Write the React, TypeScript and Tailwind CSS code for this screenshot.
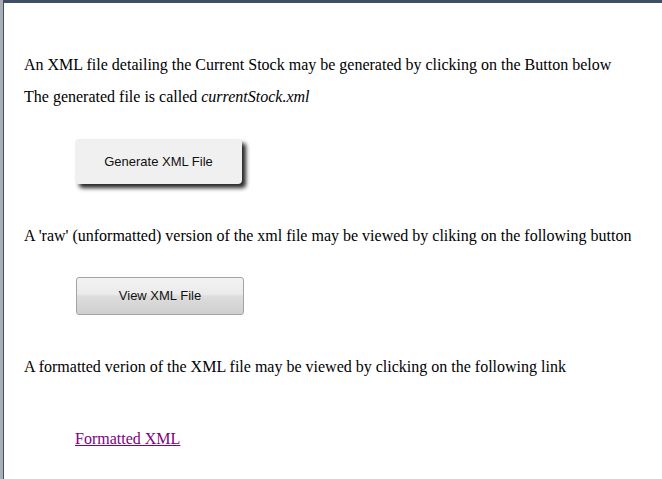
const App = () => {
  return (
    <div className="min-h-[479px] w-[662px] bg-[#a9adb4] pl-[3px] font-['Liberation_Serif',serif] text-[16px] text-black">
      <div className="min-h-[479px] border-l border-t-[3px] border-[#3d5068] bg-white pl-[20px] pt-[52px]">
        <p className="leading-[20px]">
          An XML file detailing the Current Stock may be generated by clicking on the Button below
        </p>
        <p className="mt-[12px] leading-[20px]">
          The generated file is called <i>currentStock.xml</i>
        </p>
        <div className="mt-[32px] pl-[51px]">
          <button className="h-[45px] w-[167px] rounded-[4px] bg-[#f0f0f0] font-['Liberation_Sans',sans-serif] text-[13px] text-[#111] shadow-[4px_4px_4px_rgba(0,0,0,0.85)]">
            Generate XML File
          </button>
        </div>
        <p className="mt-[42px] leading-[20px]">
          A 'raw' (unformatted) version of the xml file may be viewed by cliking on the following button
        </p>
        <div className="mt-[31px] pl-[52px]">
          <button className="h-[38px] w-[168px] rounded-[3px] border border-[#a3a3a3] bg-[linear-gradient(#f2f2f2_0%,#ebebeb_45%,#dddddd_50%,#cfcfcf_100%)] font-['Liberation_Sans',sans-serif] text-[13px] text-[#111]">
            View XML File
          </button>
        </div>
        <p className="mt-[42px] leading-[20px]">
          A formatted verion of the XML file may be viewed by clicking on the following link
        </p>
        <div className="mt-[52px] pl-[51px] leading-[20px]">
          <a href="#" className="text-[#800080] underline">
            Formatted XML
          </a>
        </div>
      </div>
    </div>
  );
};

export default App;
